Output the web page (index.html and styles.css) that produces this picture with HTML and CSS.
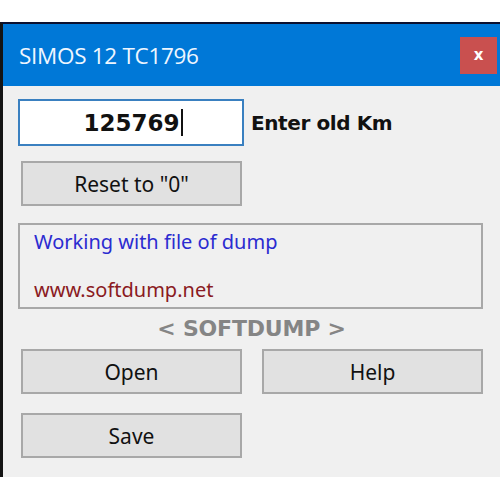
FILE: index.html
```html
<!DOCTYPE html>
<html>
<head>
<meta charset="utf-8">
<link rel="stylesheet" href="styles.css">
</head>
<body>
<div class="window">
  <div class="titlebar">
    <span class="title">SIMOS 12 TC1796</span>
    <span class="close">x</span>
  </div>
  <div class="content">
    <div class="row-km">
      <div class="input"><span class="value">125769</span><span class="caret"></span></div>
      <span class="label">Enter old Km</span>
    </div>
    <div class="btn btn-reset">Reset to "0"</div>
    <div class="info">
      <div class="info-line blue">Working with file of dump</div>
      <div class="info-line red">www.softdump.net</div>
    </div>
    <div class="brand">&lt; SOFTDUMP &gt;</div>
    <div class="btn-grid">
      <div class="btn">Open</div>
      <div class="btn">Help</div>
      <div class="btn">Save</div>
    </div>
  </div>
</div>
</body>
</html>
```
FILE: styles.css
```css
html, body {
  margin: 0;
  padding: 0;
  background: #ffffff;
}
.window {
  margin-top: 22px;
  width: 520px;
  border-top: 2px solid #0b1030;
  border-left: 3px solid #141414;
  font-family: "Noto Sans", "Liberation Sans", sans-serif;
}
.titlebar {
  height: 62px;
  background: #0078d7;
  display: flex;
  align-items: center;
  padding-left: 16px;
}
.title {
  color: #eef6ff;
  font-family: "Open Sans", "Noto Sans", sans-serif;
  font-size: 22.5px;
  letter-spacing: -0.3px;
}
.close {
  margin-left: auto;
  margin-right: 26px;
  width: 37px;
  height: 37px;
  background: #c9504f;
  color: #ffffff;
  font-weight: bold;
  font-size: 15px;
  display: flex;
  align-items: center;
  justify-content: center;
  font-family: "DejaVu Sans", sans-serif;
  line-height: 1;
}
.content {
  background: #f0f0f0;
  height: 391px;
  padding: 13px 0 0 15px;
  box-sizing: border-box;
}
.row-km {
  display: flex;
  align-items: center;
}
.input {
  width: 226px;
  height: 47px;
  box-sizing: border-box;
  border: 2px solid #3a80c0;
  background: #ffffff;
  display: flex;
  align-items: center;
  justify-content: center;
  padding-left: 4px;
}
.value {
  font-family: "DejaVu Sans", sans-serif;
  font-weight: bold;
  font-size: 23px;
  color: #111;
}
.caret {
  width: 2px;
  height: 27px;
  background: #111;
  margin-left: 1px;
}
.label {
  margin-left: 7px;
  font-family: "DejaVu Sans", sans-serif;
  font-weight: bold;
  font-size: 20px;
  letter-spacing: -0.4px;
  color: #111;
}
.btn {
  width: 221px;
  height: 45px;
  box-sizing: border-box;
  border: 2px solid #a8a8a8;
  background: #e1e1e1;
  display: flex;
  align-items: center;
  justify-content: center;
  font-size: 21px;
  color: #111;
}
.btn-reset {
  margin: 15px 0 0 3px;
}
.info {
  margin-top: 17px;
  width: 465px;
  height: 86px;
  box-sizing: border-box;
  border: 2px solid #a8a8a8;
  padding: 5px 0 0 14px;
  display: flex;
  flex-direction: column;
  gap: 24px;
}
.info-line {
  font-size: 20px;
  line-height: 24px;
}
.blue {
  color: #2b2bd0;
}
.red {
  color: #8a1a22;
}
.brand {
  width: 467px;
  text-align: center;
  margin-top: 8px;
  font-family: "DejaVu Sans", sans-serif;
  font-weight: bold;
  font-size: 22px;
  letter-spacing: -0.2px;
  color: #858585;
  line-height: 24px;
}
.btn-grid {
  margin: 8px 0 0 3px;
  display: grid;
  grid-template-columns: 221px 221px;
  column-gap: 20px;
  row-gap: 19px;
}
```
